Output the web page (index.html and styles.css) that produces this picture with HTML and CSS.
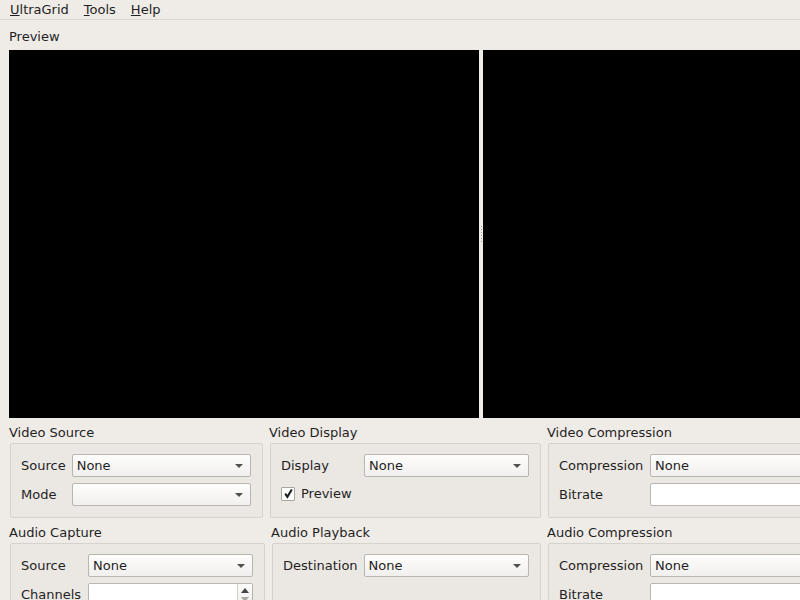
FILE: index.html
```html
<!DOCTYPE html>
<html>
<head>
<meta charset="utf-8">
<title>UltraGrid</title>
<link rel="stylesheet" href="styles.css">
</head>
<body>
<div class="window">
  <nav class="menubar">
    <span class="menu"><u>U</u>ltraGrid</span>
    <span class="menu"><u>T</u>ools</span>
    <span class="menu"><u>H</u>elp</span>
  </nav>
  <main class="central">
    <div class="preview-label">Preview</div>
    <div class="preview">
      <div class="screen"></div>
      <div class="splitter">
        <div class="grip"><i></i><i></i><i></i><i></i><i></i><i></i></div>
      </div>
      <div class="screen"></div>
    </div>

    <div class="group-row">
      <section class="group w-vsrc">
        <div class="group-title">Video Source</div>
        <div class="group-box form">
          <span class="label">Source</span>
          <div class="combo"><span>None</span><b class="arrow"></b></div>
          <span class="label">Mode</span>
          <div class="combo"><span></span><b class="arrow"></b></div>
        </div>
      </section>
      <section class="group w-vdisp">
        <div class="group-title">Video Display</div>
        <div class="group-box form form-wide">
          <span class="label">Display</span>
          <div class="combo"><span>None</span><b class="arrow"></b></div>
          <label class="check span2">
            <span class="checkbox"><svg width="11" height="11" viewBox="0 0 11 11"><path d="M2.2 5.6 L4.4 8.8 L8.8 1.6" fill="none" stroke="#1a1a1a" stroke-width="2" stroke-linejoin="miter"/></svg></span>
            <span>Preview</span>
          </label>
        </div>
      </section>
      <section class="group w-last">
        <div class="group-title">Video Compression</div>
        <div class="group-box form form-comp">
          <span class="label">Compression</span>
          <div class="combo"><span>None</span><b class="arrow"></b></div>
          <span class="label">Bitrate</span>
          <div class="lineedit"></div>
        </div>
      </section>
    </div>

    <div class="group-row">
      <section class="group w-acap">
        <div class="group-title">Audio Capture</div>
        <div class="group-box form form-acap">
          <span class="label">Source</span>
          <div class="combo"><span>None</span><b class="arrow"></b></div>
          <span class="label">Channels</span>
          <div class="spinbox"><span class="spin-field"></span><span class="spin-btns"><b class="up"></b><b class="down"></b></span></div>
        </div>
      </section>
      <section class="group w-aplay">
        <div class="group-title">Audio Playback</div>
        <div class="group-box form">
          <span class="label">Destination</span>
          <div class="combo"><span>None</span><b class="arrow"></b></div>
        </div>
      </section>
      <section class="group w-last">
        <div class="group-title">Audio Compression</div>
        <div class="group-box form form-comp">
          <span class="label">Compression</span>
          <div class="combo"><span>None</span><b class="arrow"></b></div>
          <span class="label">Bitrate</span>
          <div class="lineedit"></div>
        </div>
      </section>
    </div>
  </main>
</div>
</body>
</html>
```

FILE: styles.css
```css
html, body {
  margin: 0;
  padding: 0;
  width: 800px;
  height: 600px;
  overflow: hidden;
  background: #efebe7;
}

body {
  font-family: "DejaVu Sans", "Liberation Sans", sans-serif;
  font-size: 13px;
  color: #1f1f1f;
}

.window {
  width: 1100px;
}

.menubar {
  display: flex;
  gap: 15px;
  height: 19px;
  line-height: 19px;
  padding-left: 10px;
  border-bottom: 1px solid #dad6d1;
}

.menu u {
  text-decoration: underline;
  text-underline-offset: 1px;
}

.central {
  padding: 9px 0 0 9px;
}

.preview-label {
  height: 16px;
  line-height: 16px;
}

.preview {
  display: flex;
  height: 368px;
  margin-top: 5px;
}

.screen {
  flex: none;
  width: 470px;
  background: #000;
}

.splitter {
  flex: none;
  width: 4px;
  display: flex;
  align-items: center;
  justify-content: center;
}

.grip {
  display: flex;
  flex-direction: column;
  gap: 2px;
  margin-left: 1px;
}

.grip i {
  display: block;
  width: 1px;
  height: 1px;
  background: #9d9893;
}

.group-row {
  display: flex;
  gap: 6px;
  margin-top: 7px;
}

.group {
  flex: none;
}

.w-vsrc { width: 254px; }
.w-vdisp { width: 272px; }
.w-acap { width: 256px; }
.w-aplay { width: 270px; }
.w-last { width: 320px; }

.group-title {
  height: 16px;
  line-height: 16px;
}

.group-box {
  margin: 2px 0 0 1px;
  border: 1px solid #d6d2cd;
  border-radius: 2px;
  background: #ebe7e3;
  padding: 10px 11px 11px 10px;
  height: 52px;
}

.form {
  display: grid;
  grid-template-columns: auto 1fr;
  grid-auto-rows: 23px;
  column-gap: 6px;
  row-gap: 6px;
  align-items: center;
  align-content: start;
}

.form-wide {
  grid-template-columns: 77px 1fr;
}

.form-comp {
  grid-template-columns: 85px 1fr;
}

.form-acap {
  grid-template-columns: 61px 1fr;
}

.span2 {
  grid-column: 1 / 3;
}

.label {
  white-space: nowrap;
}

.combo {
  position: relative;
  height: 21px;
  border: 1px solid #b9b5b0;
  border-radius: 2px;
  background: linear-gradient(#fdfdfc, #f2f0ee);
  display: flex;
  align-items: center;
  padding-left: 4px;
  line-height: 21px;
}

.arrow {
  position: absolute;
  right: 7px;
  top: 9px;
  width: 0;
  height: 0;
  border-left: 4px solid transparent;
  border-right: 4px solid transparent;
  border-top: 4px solid #505050;
}

.lineedit {
  height: 21px;
  border: 1px solid #b9b5b0;
  border-radius: 2px;
  background: #fff;
}

.spinbox {
  height: 21px;
  border: 1px solid #b9b5b0;
  border-radius: 2px;
  background: #fff;
  display: flex;
}

.spin-field {
  flex: 1;
}

.spin-btns {
  width: 14px;
  border-left: 1px solid #d4d0cc;
  display: flex;
  flex-direction: column;
  align-items: center;
  justify-content: space-between;
  padding: 4px 0 3px;
  background: linear-gradient(#fbfbfa, #f1efed);
}

.spin-btns .up {
  width: 0;
  height: 0;
  border-left: 4px solid transparent;
  border-right: 4px solid transparent;
  border-bottom: 5px solid #454545;
}

.spin-btns .down {
  width: 0;
  height: 0;
  border-left: 4px solid transparent;
  border-right: 4px solid transparent;
  border-top: 5px solid #aaa6a2;
}

.check {
  display: flex;
  align-items: center;
  gap: 6px;
  margin-bottom: 2px;
}

.checkbox {
  width: 12px;
  height: 12px;
  border: 1px solid #a9a5a0;
  border-radius: 1px;
  background: #fff;
  display: flex;
  align-items: center;
  justify-content: center;
}

.checkbox svg {
  display: block;
}
```
